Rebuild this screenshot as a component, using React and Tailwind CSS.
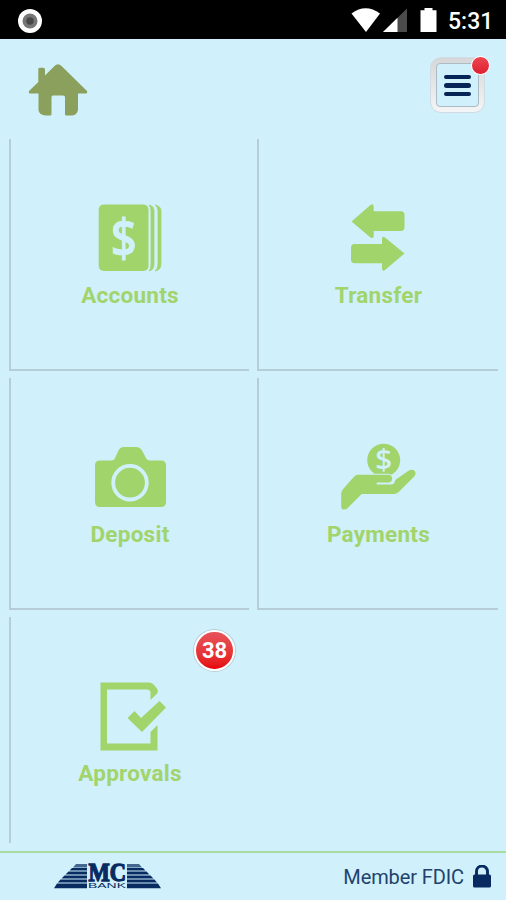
import React from 'react';

function HomeIcon() {
    return (
        <svg width="60" height="54" viewBox="0 0 60 54" fill="#8ba05c">
            <path d="M10.3 5.2Q10.3 3.8 12 3.8H15.4Q17 3.8 17 5.5V11.5L26.5 2Q30 -1.5 33.5 2L59 27Q60 29.500 57.5 29.500H50V46Q49 51.500 43 51.500H38Q37 51.500 37 50V33Q37 31.500 35 31.500H25Q23.500 31.500 23.500 33V50Q23.500 51.500 22 51.500H17Q11 50.500 10.500 46V29.500H2.500Q0 29.500 1 27L10.300 18Z" />
        </svg>
    );
}

function AccountsIcon() {
    return (
        <svg width="120" height="90" viewBox="0 0 120 90" fill="#a2d46c">
            <rect x="28.7" y="14.5" width="49.8" height="66.5" rx="5" />
            <path d="M79 15Q84 16 84 21V74Q84 80 79 81Q81 79 81 74V21Q81 17 79 15Z" stroke="#a2d46c" strokeWidth=".7" />
            <path d="M85 15Q91 16 91 21V74Q91 80 85 81Q88 79 88 74V21Q88 17 85 15Z" stroke="#a2d46c" strokeWidth=".7" />
            <text x="53.7" y="66.500" fontSize="52" fontWeight="600" textAnchor="middle" textLength="26" lengthAdjust="spacingAndGlyphs" fill="#d0f0fb" stroke="#d0f0fb" strokeWidth=".8" fontFamily="Open Sans, sans-serif">$</text>
        </svg>
    );
}

function TransferIcon() {
    return (
        <svg width="120" height="90" viewBox="0 0 120 90" fill="#a2d46c">
            <path d="M32.500 31.500L51.500 15Q54.700 13 54.700 17V21.300H82Q85.500 21.300 85.500 25V37Q85.500 41 82 41H54.700V46Q54.700 49 51.500 47.500Z" />
            <path d="M85.500 63.500L66 80Q63 82 63 78V73.300H35.500Q32 73.300 32 69.500V58Q32 54 35.500 54H63V49Q63 45.500 66 47.500Z" />
        </svg>
    );
}

function DepositIcon() {
    return (
        <svg width="120" height="90" viewBox="0 0 120 90">
            <path fill="#a2d46c" d="M30 31.500H41.500Q44 31.500 45 29L48.500 21.500Q50 18 54 18H66Q70 18 72 21.500L76 29Q77 31.500 80 31.500H91Q96 31.500 96 36.500V73Q96 78 91 78H30Q25 78 25 73V36.500Q25 31.500 30 31.500Z" />
            <circle cx="60" cy="53.700" r="16.800" fill="none" stroke="#d0f0fb" strokeWidth="3.800" />
        </svg>
    );
}

function PaymentsIcon() {
    return (
        <svg width="120" height="90" viewBox="-.7 0 120 90" fill="#a2d46c">
            <circle cx="64" cy="31.200" r="16.500" />
            <text x="64" y="40.500" fontSize="28" textAnchor="middle" textLength="17" lengthAdjust="spacingAndGlyphs" fill="#d0f0fb" fontWeight="600" fontFamily="Open Sans, sans-serif">$</text>
            <path stroke="#d0f0fb" strokeWidth="2" paintOrder="stroke" d="M38 45.700H69Q72.500 46.500 72.500 50Q72 53 69 53.500H57V55.500H72Q75 55 75.500 51L88.500 42Q92 39.500 95 42Q97 45 94 48L79 63Q77 65 74 65H42L28 79Q26 81 23.500 80.500Q21.500 80 21.500 77.500V64.500Q21.500 62 23.500 60L34 48Q36 45.700 38 45.700Z" />
        </svg>
    );
}

function ApprovalsIcon() {
    return (
        <svg width="120" height="90" viewBox="0 0 120 90" fill="#a2d46c">
            <path d="M30.500 14.500H79.500Q82 14.500 84 17L87 20.500Q88.500 23.500 87.500 25L80.500 32V24.500Q80 21.500 77 21.500H37V75.500H80.500V64L87.500 57V82.500H30.500Z" />
            <path d="M57.500 50L64.500 43L71 50L89.500 33L96 39.500L72 64Z" />
        </svg>
    );
}

function BankLogo() {
    return (
        <svg width="108" height="27" viewBox="0 0 108 27" fill="#082b61" className="overflow-visible">
            <path d="M18 5H33V7.500H15.500ZM14.500 8.500H33V11.500H11.500ZM10.500 12.500H33V15.500H7.500ZM6.500 16.500H33V19.500H3.800ZM3 20.500H33V25.300H0Z" />
            <path d="M73 5H89L91.500 7.500H73ZM73 8.500H92.500L95.500 11.500H73ZM73 12.500H96.500L99.500 15.500H73ZM73 16.500H100.500L103 19.500H73ZM73 20.500H104L107 25.300H73Z" />
            <path d="M22 1H33V4.500H19ZM73 1H85L88 4.500H73Z" opacity=".7" />
            <text x="34.500" y="17.800" fontSize="25" fontWeight="700" textLength="37.500" lengthAdjust="spacingAndGlyphs" stroke="#082b61" strokeWidth="1.300" fontFamily="Liberation Serif, serif">MC</text>
            <text x="34" y="25.300" fontSize="7.500" textLength="38" lengthAdjust="spacingAndGlyphs" fontFamily="Liberation Sans, sans-serif">BANK</text>
        </svg>
    );
}

function StatusBar() {
    return (
        <div className="h-[39px] shrink-0 bg-black flex items-center justify-between pl-[18px] pr-[14px]">
            <svg width="24" height="24" viewBox="0 0 24 24" className="mt-0.5">
                <circle cx="12" cy="12" r="12" fill="#fff" />
                <circle cx="12" cy="12" r="7.500" fill="#777" />
                <circle cx="12" cy="12" r="3.700" fill="#484848" />
            </svg>
            <div className="flex items-center">
                <svg width="90" height="26" viewBox="0 0 90 26" fill="#fff" className="mt-px">
                    <path d="M.5 6.500Q14.500 -4 29 6.500L15 25Z" />
                    <path d="M32 25L56 1.500V25Z" fill="#4b4b4b" />
                    <path d="M32 25L46.500 10.800V25Z" />
                    <path d="M69.500 3.200H73.500V1H81.500V3.200H85.500V25H69.500Z" />
                </svg>
                <span className="ml-[7px] mt-[5px] w-[44px] text-[23px] leading-6 font-medium text-white whitespace-nowrap">5:31</span>
            </div>
        </div>
    );
}

function Header() {
    return (
        <div className="h-[100px] shrink-0 flex items-start justify-between pl-[28px] pr-[21px]">
            <div className="mt-[25px]">
                <HomeIcon />
            </div>
            <div className="relative mt-[18px] w-[55px] h-[56px] rounded-[11px] bg-gradient-to-b from-[#d5d7d9] to-[#f4f5f7] border border-[#d0dce1] p-[5px]">
                <div className="h-full rounded-[4px] border border-[#aebbc2] bg-[#d0f0fb] flex flex-col items-center justify-center gap-[4px] pt-px">
                    <div className="w-[27px] h-[4.500px] rounded-full bg-[#072457]" />
                    <div className="w-[27px] h-[4.500px] rounded-full bg-[#072457]" />
                    <div className="w-[27px] h-[4.500px] rounded-full bg-[#072457]" />
                </div>
                <div className="absolute -top-[2px] -right-[6px] w-[19px] h-[19px] rounded-full border-[1.500px] border-white bg-gradient-to-b from-[#ed4450] to-[#de1e30]" />
            </div>
        </div>
    );
}

function Tile({ icon, label, badge, last }) {
    return (
        <div className={last
            ? 'relative h-[226px] border-l-2 border-[#b5cdd6] flex flex-col items-center pt-[51px]'
            : 'relative h-[232px] border-l-2 border-b-2 border-[#b5cdd6] flex flex-col items-center pt-[51px]'}>
            {icon}
            <span className="text-[22.500px] leading-[30px] font-bold tracking-[0.25px] text-[#a2d46c]">{label}</span>
            {badge && (
                <div className="absolute top-[13px] right-[14px] w-[41px] h-[41px] rounded-full border-2 border-white ring-1 ring-[#b9ccd4] bg-gradient-to-b from-[#e6535a] to-[#e60008] flex items-center justify-center text-[22px] font-bold text-white">
                    {badge}
                </div>
            )}
        </div>
    );
}

function Footer() {
    return (
        <div className="h-[49px] shrink-0 border-t-2 border-[#a9dca0] flex items-center justify-between pl-[54px] pr-[15px]">
            <BankLogo />
            <div className="flex items-center text-[#22426e]">
                <span className="text-[20px] tracking-[-0.1px] mt-[1px]">Member FDIC</span>
                <svg width="18" height="23" viewBox="0 0 18 23" className="ml-[9px]" fill="#072b61">
                    <path d="M3.500 10V6.500A5.500 5.500 0 0 1 14.500 6.500V10" fill="none" stroke="#072b61" strokeWidth="2.900" />
                    <rect x="0" y="9.500" width="18" height="13" rx="1.500" />
                </svg>
            </div>
        </div>
    );
}

function App() {
    return (
        <div className="w-[506px] h-[900px] overflow-hidden flex flex-col bg-[#d0f0fb] font-[Roboto,sans-serif]">
            <StatusBar />
            <Header />
            <div className="flex-1 grid grid-cols-[240px_241px] gap-x-[8px] gap-y-[7px] content-start pl-[9px]">
                <Tile icon={<AccountsIcon />} label="Accounts" />
                <Tile icon={<TransferIcon />} label="Transfer" />
                <Tile icon={<DepositIcon />} label="Deposit" />
                <Tile icon={<PaymentsIcon />} label="Payments" />
                <Tile icon={<ApprovalsIcon />} label="Approvals" badge="38" last />
            </div>
            <Footer />
        </div>
    );
}

export default App;
